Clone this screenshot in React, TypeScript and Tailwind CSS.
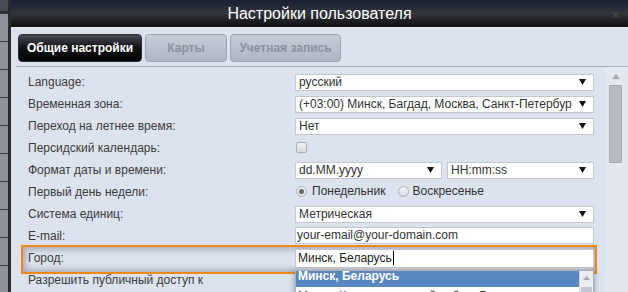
import React from "react";

const font = { fontFamily: '"Liberation Sans", Arial, sans-serif' };

function Arrow() {
  return (
    <svg width="7" height="6" viewBox="0 0 7 6" className="shrink-0">
      <polygon points="0,0 7,0 3.5,6" fill="#111" />
    </svg>
  );
}

function Select({ value, className = "" }: { value: string; className?: string }) {
  return (
    <div
      className={`h-[17px] bg-white border border-[#c3c7cf] flex items-center pl-[3px] pr-[7px] ${className}`}
    >
      <div className="flex-1 overflow-hidden whitespace-nowrap text-[12px] leading-[15px] text-[#333] mr-[7px]">
        {value}
      </div>
      <Arrow />
    </div>
  );
}

function Row({ label, children, className = "" }: { label: string; children?: React.ReactNode; className?: string }) {
  return (
    <div className={`h-[22px] flex items-center pl-[12px] pr-[11px] ${className}`}>
      <div className="w-[267px] shrink-0 text-[12px] text-[#3c3c3c] whitespace-nowrap">{label}</div>
      <div className="flex-1 flex items-center">{children}</div>
    </div>
  );
}

function Radio({ checked }: { checked?: boolean }) {
  return (
    <div className="w-[11px] h-[11px] rounded-full border border-[#aab0ba] bg-gradient-to-b from-[#f4f4f4] to-[#d9dce2] flex items-center justify-center shrink-0">
      {checked && <div className="w-[5px] h-[5px] rounded-full bg-[#666]" />}
    </div>
  );
}

export default function App() {
  const stripLines = Array.from({ length: 11 });
  return (
    <div className="w-[628px] h-[292px] overflow-hidden flex bg-[#1e1f24]" style={font}>
      {/* background strip */}
      <div className="w-[8px] shrink-0 flex flex-col bg-[#8d9099]">
        <div className="h-[27px] bg-[#4a4c53] border-b border-[#2e3036] flex flex-col">
          <div className="h-[12px] border-b border-[#2e3036]" />
        </div>
        <div className="h-[33px] border-b border-[#3a3d44]" />
        {stripLines.map((_, i) => (
          <div key={i} className="h-[28px] shrink-0 border-b border-[#3a3d44]" />
        ))}
      </div>

      {/* dialog */}
      <div className="flex-1 flex flex-col bg-[#2a2c32] pl-[3px] min-w-0">
        <div className="h-[27px] shrink-0 relative flex items-center justify-center bg-gradient-to-b from-[#1a2032] via-[#34363d] to-[#0e0f12]">
          <span className="text-white text-[16px] leading-none">Настройки пользователя</span>
          <span className="absolute right-[8px] top-[5px] text-[14px] text-[#4b4d54]">×</span>
        </div>

        <div className="flex-1 bg-[#dce2ee] flex flex-col min-h-0">
          {/* tabs */}
          <div className="flex gap-[3px] pl-[7px] pt-[7px]">
            <div className="w-[124px] h-[28px] rounded-[4px] border border-[#2c2f36] bg-gradient-to-b from-[#4a4d56] via-[#111216] to-[#050505] flex items-center justify-center text-white font-bold text-[12px]">
              Общие настройки
            </div>
            <div className="w-[82px] h-[28px] rounded-[4px] border border-[#9ca5b5] bg-gradient-to-b from-[#c6cdd9] to-[#adb5c4] flex items-center justify-center text-[#8a919e] font-bold text-[12px]">
              Карты
            </div>
            <div className="w-[111px] h-[28px] rounded-[4px] border border-[#9ca5b5] bg-gradient-to-b from-[#c6cdd9] to-[#adb5c4] flex items-center justify-center text-[#8a919e] font-bold text-[12px]">
              Учетная запись
            </div>
          </div>

          {/* content */}
          <div className="mt-[4px] ml-[5px] flex flex-1 min-h-0 border-t border-[#a9b0bd]">
            <div className="w-[589px] shrink-0 pt-[4px] flex flex-col">
              <Row label="Language:">
                <Select value="русский" className="w-[299px]" />
              </Row>
              <Row label="Временная зона:">
                <Select value="(+03:00) Минск, Багдад, Москва, Санкт-Петербург" className="w-[299px]" />
              </Row>
              <Row label="Переход на летнее время:">
                <Select value="Нет" className="w-[299px]" />
              </Row>
              <Row label="Персидский календарь:">
                <div className="ml-[1px] mb-[2px] w-[11px] h-[11px] rounded-[2px] border border-[#a9aeb8] bg-gradient-to-b from-[#f2f2f2] to-[#d6d9df]" />
              </Row>
              <Row label="Формат даты и времени:">
                <div className="flex gap-[5px]">
                  <Select value="dd.MM.yyyy" className="w-[147px]" />
                  <Select value="HH:mm:ss" className="w-[147px]" />
                </div>
              </Row>
              <Row label="Первый день недели:">
                <div className="flex items-center text-[12px] text-[#333] ml-[1px] mb-[2px]">
                  <Radio checked />
                  <span className="ml-[5px]">Понедельник</span>
                  <span className="ml-[13px]"><Radio /></span>
                  <span className="ml-[3px]">Воскресенье</span>
                </div>
              </Row>
              <Row label="Система единиц:">
                <Select value="Метрическая" className="w-[299px]" />
              </Row>
              <Row label="E-mail:">
                <div className="w-[299px] h-[17px] mb-[2px] bg-white border border-[#c3c7cf] flex items-center pl-[1px] text-[12px] text-[#333] whitespace-nowrap">
                  your-email@your-domain.com
                </div>
              </Row>
              <div className="relative">
                <div className="absolute left-[5px] right-[8px] top-[-2px] bottom-[-5px] border-2 border-[#f28a1a] shadow-[inset_0_0_6px_2px_rgba(0,0,0,0.28)]" />
                <Row label="Город:" className="relative">
                  <div className="w-[299px] h-[19px] bg-white border border-[#c3c7cf] flex items-center pl-[2px] text-[12px] text-[#222] whitespace-nowrap">
                    Минск, Беларусь<span className="inline-block w-px h-[14px] bg-black ml-[1px]" />
                  </div>
                </Row>
                {/* autocomplete list */}
                <div className="absolute left-[279px] top-[23px] w-[299px] h-[40px] bg-white border border-[#aab0ba] shadow-[0_2px_6px_rgba(0,0,0,0.35)] flex overflow-hidden z-10">
                  <div className="flex-1 overflow-hidden">
                    <div className="h-[16px] bg-[#5b87bf] text-white font-bold text-[12px] leading-[16px] pl-[2px] overflow-hidden">
                      <div className="-mt-[3px]">Минск, Беларусь</div>
                    </div>
                    <div className="h-[16px] text-[#333] text-[12px] leading-[16px] pl-[2px] pt-[1px] whitespace-nowrap">
                      Минск, Калининградский район, Россия
                    </div>
                  </div>
                  <div className="w-[14px] bg-[#ecedf0] border-l border-[#d3d6dc] flex flex-col items-center pt-[5px]">
                    <svg width="7" height="4" viewBox="0 0 7 4"><polygon points="0,4 7,4 3.5,0" fill="#a4a8b0" /></svg>
                    <div className="mt-[7px] w-[11px] flex-1 bg-[#c4c7cd]" />
                  </div>
                </div>
              </div>
              <Row label="Разрешить публичный доступ к" />
            </div>

            {/* main scrollbar */}
            <div className="flex-1 bg-[#e3e7ef] flex flex-col pl-[4px] pr-[6px]">
              <div className="h-[18px] flex items-center justify-center">
                <svg width="8" height="5" viewBox="0 0 8 5"><polygon points="0,5 8,5 4,0" fill="#a9adb5" /></svg>
              </div>
              <div className="h-[78px] bg-[#b7bbc3] border border-[#a8acb4]" />
            </div>
          </div>
        </div>
      </div>
    </div>
  );
}
